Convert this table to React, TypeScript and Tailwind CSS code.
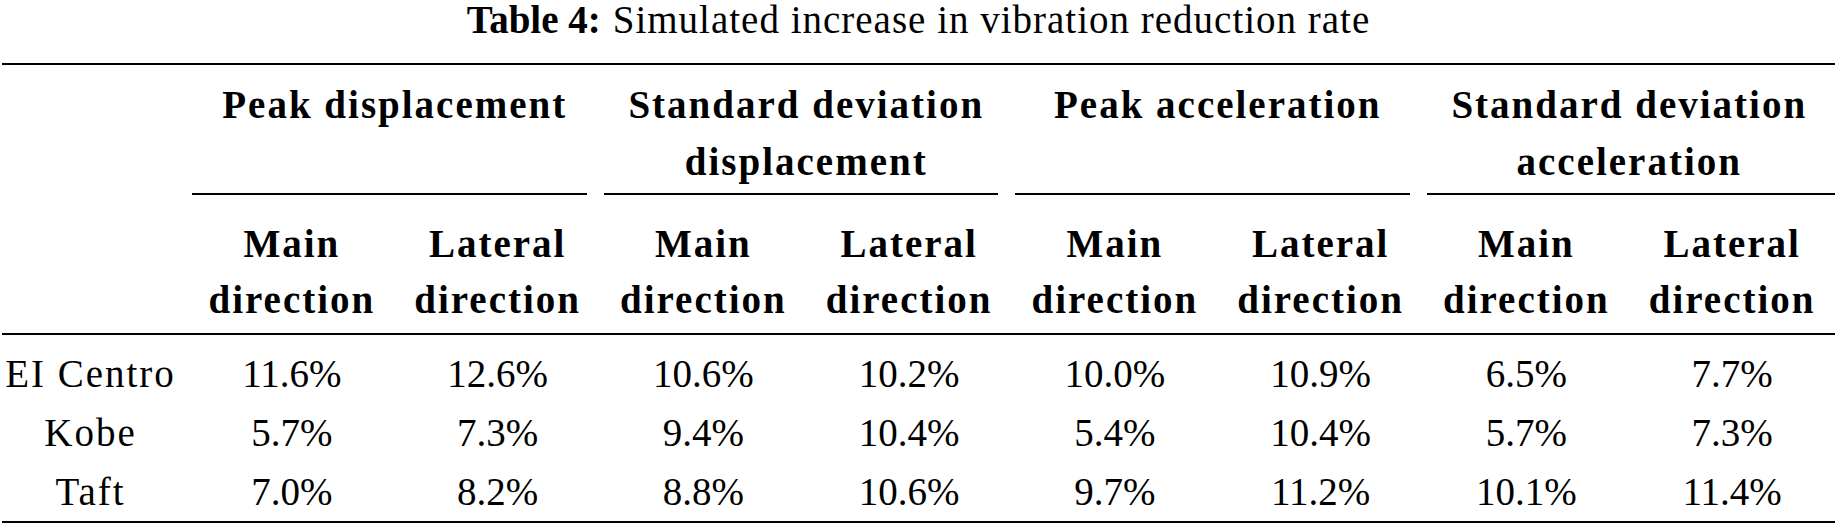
const groups = [
  ["Peak displacement"],
  ["Standard deviation", "displacement"],
  ["Peak acceleration"],
  ["Standard deviation", "acceleration"],
];

const rows = [
  { name: "EI Centro", values: ["11.6%", "12.6%", "10.6%", "10.2%", "10.0%", "10.9%", "6.5%", "7.7%"] },
  { name: "Kobe", values: ["5.7%", "7.3%", "9.4%", "10.4%", "5.4%", "10.4%", "5.7%", "7.3%"] },
  { name: "Taft", values: ["7.0%", "8.2%", "8.8%", "10.6%", "9.7%", "11.2%", "10.1%", "11.4%"] },
];

const subHeads = ["Main", "Lateral", "Main", "Lateral", "Main", "Lateral", "Main", "Lateral"];

// the arbitrary font class did not get picked up here, so set the family directly
const serif = { fontFamily: "'Liberation Serif', 'Times New Roman', serif" };

export default function App() {
  return (
    <div
      style={serif}
      className="font-['Liberation_Serif'] w-[1839px] h-[527px] bg-white text-black text-[39px] pl-[2px] pr-[4px]"
    >
      <div className="h-[63px] text-center leading-[39px]">
        <span className="font-bold">Table 4:</span>
        <span className="ml-[12px] tracking-[1px]">Simulated increase in vibration reduction rate</span>
      </div>
      <div className="h-[2px] bg-black" />

      {/* group headers */}
      <div className="grid grid-cols-[187px_repeat(8,1fr)] pt-[11px] pb-[3px] leading-[57px] font-bold tracking-[2px] text-center">
        <div />
        {groups.map((g, i) => (
          <div key={i} className="col-span-2 flex flex-col">
            {g.map((line) => (
              <span key={line}>{line}</span>
            ))}
          </div>
        ))}
      </div>

      {/* cmidrules */}
      <div className="grid grid-cols-[187px_repeat(8,1fr)] h-[2px]">
        <div />
        <div className="col-span-2 bg-black ml-[3px] mr-[14px]" />
        <div className="col-span-2 bg-black ml-[3px] mr-[14px]" />
        <div className="col-span-2 bg-black ml-[3px] mr-[14px]" />
        <div className="col-span-2 bg-black ml-[3px]" />
      </div>

      {/* sub headers */}
      <div className="grid grid-cols-[187px_repeat(8,1fr)] pt-[21px] pb-[5px] leading-[56px] font-bold tracking-[2px] text-center">
        <div />
        {subHeads.map((h, i) => (
          <div key={i} className="flex flex-col">
            <span>{h}</span>
            <span>direction</span>
          </div>
        ))}
      </div>
      <div className="h-[2px] bg-black" />

      {/* data */}
      <div className="pt-[9px] leading-[59px]">
        {rows.map((r) => (
          <div key={r.name} className="grid grid-cols-[187px_repeat(8,1fr)] text-center">
            <div className="pr-[10px] tracking-[2px]">{r.name}</div>
            {r.values.map((v, i) => (
              <div key={i}>{v}</div>
            ))}
          </div>
        ))}
      </div>
      <div className="h-[2px] bg-black" />
    </div>
  );
}
